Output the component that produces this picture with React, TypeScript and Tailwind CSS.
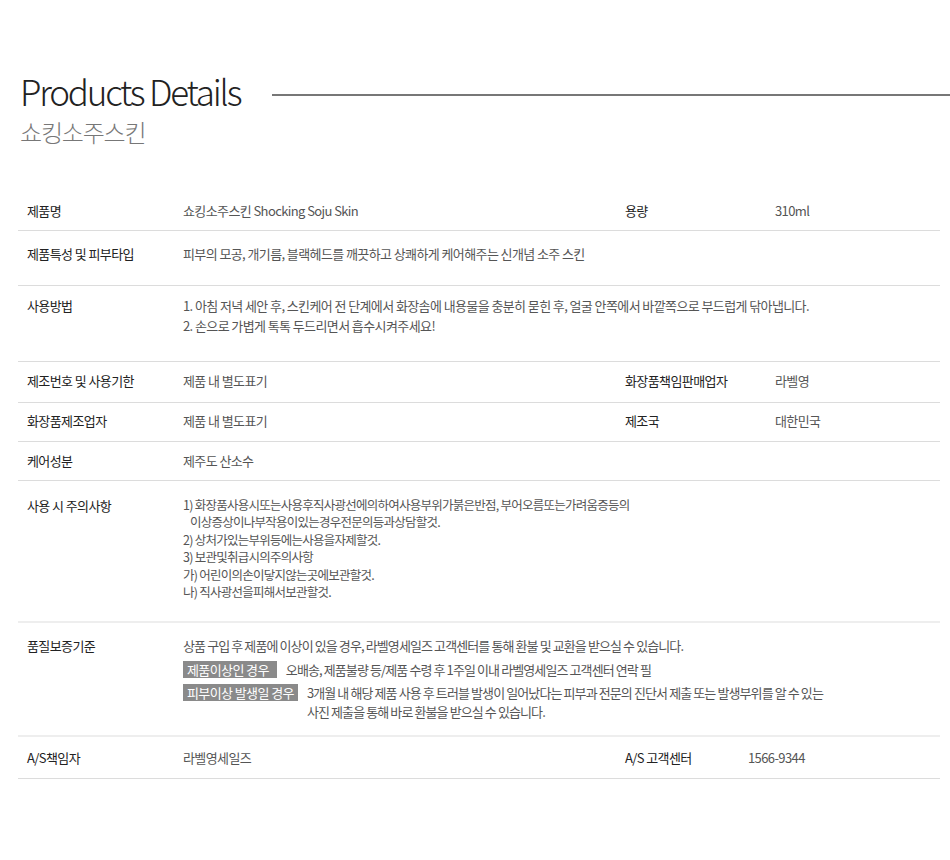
const font = { fontFamily: '"Noto Sans CJK KR", "Noto Sans", sans-serif' };

const Row = ({
  label,
  value,
  label2,
  value2,
  wide,
  className,
  children,
}: {
  label: string;
  value?: string;
  label2?: string;
  value2?: string;
  wide?: boolean;
  className: string;
  children?: React.ReactNode;
}) => {
  return (
    <div className={"flex border-b border-[#dcdcdc] " + className}>
      <div className="w-[165px] pl-[9px] text-[#222]">{label}</div>
      <div className={wide ? "flex-1 text-[#555]" : "w-[442px] text-[#555]"}>{children ?? value}</div>
      {label2 && (
        <>
          <div className={value2 === "1566-9344" ? "w-[123px] text-[#222]" : "w-[150px] text-[#222]"}>{label2}</div>
          <div className="text-[#555]">{value2}</div>
        </>
      )}
    </div>
  );
};

export default function App() {
  return (
    <div className="w-[950px] h-[860px] bg-white" style={font}>
      <div className="pt-[66px] pl-[20px]">
        <div className="flex items-center">
          <h1 className="text-[35px] leading-[50px] font-light tracking-[-2.2px] text-[#222]">Products Details</h1>
          <div className="flex-1 ml-[32px] mt-[8px] h-[2px] bg-[#777]"></div>
        </div>
        <h2 className="text-[24px] leading-[30px] tracking-[-1.2px] text-[#777] font-light mt-[1px]">쇼킹소주스킨</h2>
      </div>

      <div className="ml-[18px] w-[922px] mt-[43px] text-[13px] leading-[20px] tracking-[-0.6px]">
        <Row className="h-[41px] pt-[11px]" label="제품명" value="쇼킹소주스킨 Shocking Soju Skin" label2="용량" value2="310ml" />
        <Row className="h-[55px] pt-[13px]" label="제품특성 및 피부타입" value="피부의 모공, 개기름, 블랙헤드를 깨끗하고 상쾌하게 케어해주는 신개념 소주 스킨" wide />
        <Row className="h-[76px] pt-[10px]" label="사용방법" wide>
          <p>1. 아침 저녁 세안 후, 스킨케어 전 단계에서 화장솜에 내용물을 충분히 묻힌 후, 얼굴 안쪽에서 바깥쪽으로 부드럽게 닦아냅니다.</p>
          <p>2. 손으로 가볍게 톡톡 두드리면서 흡수시켜주세요!</p>
        </Row>
        <Row className="h-[41px] pt-[9px]" label="제조번호 및 사용기한" value="제품 내 별도표기" label2="화장품책임판매업자" value2="라벨영" />
        <Row className="h-[39px] pt-[8px]" label="화장품제조업자" value="제품 내 별도표기" label2="제조국" value2="대한민국" />
        <Row className="h-[39px] pt-[9px]" label="케어성분" value="제주도 산소수" wide />
        <Row className="h-[142px] pt-[15px] border-[#eee] border-b-2" label="사용 시 주의사항" wide>
          <div className="leading-[17.4px] text-[12.5px] tracking-[-0.75px]">
            <p>1) 화장품사용시또는사용후직사광선에의하여사용부위가붉은반점, 부어오름또는가려움증등의</p>
            <p className="pl-[7px]">이상증상이나부작용이있는경우전문의등과상담할것.</p>
            <p>2) 상처가있는부위등에는사용을자제할것.</p>
            <p>3) 보관및취급시의주의사항</p>
            <p>가) 어린이의손이닿지않는곳에보관할것.</p>
            <p>나) 직사광선을피해서보관할것.</p>
          </div>
        </Row>
        <Row className="h-[114px] pt-[13px] border-[#eee] border-b-2" label="품질보증기준" wide>
          <div className="tracking-[-0.9px]">
            <p>상품 구입 후 제품에 이상이 있을 경우, 라벨영세일즈 고객센터를 통해 환불 및 교환을 받으실 수 있습니다.</p>
            <div className="flex items-start mt-[5px]">
              <span className="shrink-0 whitespace-nowrap bg-[#8a8a8a] text-white leading-[17px] tracking-[-0.6px] pl-[4px] pr-[8px]">제품이상인 경우</span>
              <span className="ml-[9px] leading-[17px]">오배송, 제품불량 등/제품 수령 후 1주일 이내 라벨영세일즈 고객센터 연락 필</span>
            </div>
            <div className="flex items-start mt-[5px]">
              <span className="shrink-0 whitespace-nowrap bg-[#8a8a8a] text-white leading-[17px] mt-[1px] tracking-[-0.6px] pl-[4px] pr-[4px]">피부이상 발생일 경우</span>
              <div className="ml-[9px] leading-[19px]">
                <p>3개월 내 해당 제품 사용 후 트러블 발생이 일어났다는 피부과 전문의 진단서 제출 또는 발생부위를 알 수 있는</p>
                <p>사진 제출을 통해 바로 환불을 받으실 수 있습니다.</p>
              </div>
            </div>
          </div>
        </Row>
        <Row className="h-[42px] pt-[11px]" label="A/S책임자" value="라벨영세일즈" label2="A/S 고객센터" value2="1566-9344" />
      </div>
    </div>
  );
}
